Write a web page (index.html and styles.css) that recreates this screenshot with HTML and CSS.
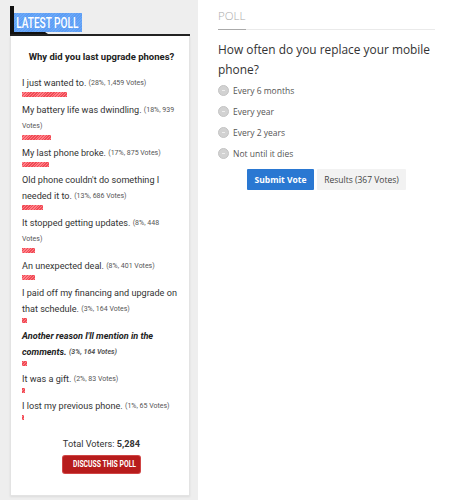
FILE: index.html
```html
<!DOCTYPE html>
<html lang="en">
<head>
  <meta charset="UTF-8" />
  <meta name="viewport" content="width=device-width, initial-scale=1.0" />
  <title>Polls</title>
  <link rel="stylesheet" href="styles.css">
</head>
<body>
  <aside class="sidebar">
    <div class="poll-head">
      <span class="badge"><span class="badge-text">LATEST POLL</span></span>
    </div>
    <div class="card">
      <h3 class="question">Why did you last upgrade phones?</h3>
      <ul class="results">
        <li>I just wanted to. <span class="votes">(28%, 1,459 Votes)</span><div class="bar" style="width: 28%"></div></li>
        <li>My battery life was dwindling. <span class="votes">(18%, 939 Votes)</span><div class="bar" style="width: 18%"></div></li>
        <li>My last phone broke. <span class="votes">(17%, 875 Votes)</span><div class="bar" style="width: 17%"></div></li>
        <li>Old phone couldn't do something I needed it to. <span class="votes">(13%, 686 Votes)</span><div class="bar" style="width: 13%"></div></li>
        <li>It stopped getting updates. <span class="votes">(8%, 448 Votes)</span><div class="bar" style="width: 8%"></div></li>
        <li>An unexpected deal. <span class="votes">(8%, 401 Votes)</span><div class="bar" style="width: 8%"></div></li>
        <li>I paid off my financing and upgrade on that schedule. <span class="votes">(3%, 164 Votes)</span><div class="bar" style="width: 3%"></div></li>
        <li class="mine">Another reason I'll mention in the comments. <span class="votes">(3%, 164 Votes)</span><div class="bar" style="width: 3%"></div></li>
        <li>It was a gift. <span class="votes">(2%, 83 Votes)</span><div class="bar" style="width: 2%"></div></li>
        <li>I lost my previous phone. <span class="votes">(1%, 65 Votes)</span><div class="bar" style="width: 1%"></div></li>
      </ul>
      <p class="total">Total Voters: <b>5,284</b></p>
      <div class="discuss-wrap">
        <a href="#" class="discuss"><span class="discuss-text">DISCUSS THIS POLL</span></a>
      </div>
    </div>
  </aside>

  <main class="main">
    <h4 class="section-title"><span>POLL</span></h4>
    <p class="main-question">How often do you replace your mobile phone?</p>
    <ul class="answers">
      <li><span class="radio"></span>Every 6 months</li>
      <li><span class="radio"></span>Every year</li>
      <li><span class="radio"></span>Every 2 years</li>
      <li><span class="radio"></span>Not until it dies</li>
    </ul>
    <div class="actions">
      <button type="button" class="submit">Submit Vote</button>
      <button type="button" class="show-results">Results (367 Votes)</button>
    </div>
  </main>
</body>
</html>
```

FILE: styles.css
```css
body {
  margin: 0;
  display: flex;
  min-height: 500px;
  font-family: 'Roboto', 'Liberation Sans', sans-serif;
  background: #fff;
}

.sidebar {
  width: 180px;
  padding: 0 8px 6px 10px;
  background-color: #eeeeee;
}

.poll-head {
  position: relative;
  height: 21px;
  padding-top: 13px;
  border-bottom: 2px solid #222;
}

.poll-head::before {
  content: "";
  position: absolute;
  left: 0;
  top: 6px;
  width: 4px;
  height: 28px;
  background: #111;
}

.poll-head::after {
  content: "";
  position: absolute;
  left: 0;
  top: 32px;
  width: 38px;
  height: 2px;
  background: #111;
  clip-path: polygon(0 0, 35px 0, 100% 100%, 0 100%);
}

.badge {
  display: block;
  margin-left: 4px;
  width: 68px;
  height: 19px;
  overflow: hidden;
  background: repeating-linear-gradient(-45deg, #5d9df4 0 1px, #6aa8f8 1px 2px);
}

.badge-text {
  display: inline-block;
  padding-left: 3px;
  font-size: 14px;
  font-weight: 500;
  line-height: 20px;
  color: #fff;
  white-space: nowrap;
  transform: scaleX(0.72);
  transform-origin: left center;
}

.card {
  background: #fff;
  border: 1px solid #e3e3e3;
  border-top: none;
  box-shadow: 0 1px 2px rgba(0, 0, 0, 0.08);
  padding: 13px 8px 22px 11px;
}

.question {
  margin: 0 0 10px;
  font-size: 9.5px;
  line-height: 16px;
  text-align: center;
  color: #222;
}

.results {
  list-style: none;
  margin: 0;
  padding: 0;
}

.results li {
  font-size: 9.1px;
  line-height: 16px;
  color: #333;
  margin-bottom: 5px;
}

.results .votes {
  font-size: 7px;
  vertical-align: top;
  color: #555;
}

.results .mine {
  font-weight: bold;
  font-style: italic;
  color: #222;
}

.bar {
  height: 5px;
  margin-top: 1px;
  min-width: 1px;
  background: repeating-linear-gradient(-45deg, #ef4b55 0 1px, #ff8088 1px 2px);
}

.total {
  margin: 16px 0 4px;
  font-size: 9.2px;
  line-height: 16px;
  text-align: center;
  color: #333;
}

.discuss-wrap {
  text-align: center;
  line-height: 0;
}

.discuss {
  display: inline-block;
  width: 77px;
  height: 17px;
  overflow: hidden;
  background: #b71c1c;
  border-radius: 2px;
  box-shadow: 0 0 0 1px #d04545;
  text-decoration: none;
}

.discuss-text {
  display: inline-block;
  font-size: 9px;
  font-weight: bold;
  line-height: 17px;
  color: #fff;
  white-space: nowrap;
  transform: scaleX(0.76);
}

.main {
  flex: 1;
  padding: 0 17px 0 20px;
  font-family: 'Open Sans', 'Liberation Sans', sans-serif;
}

.section-title {
  margin: 9px 0 0;
  padding-bottom: 6px;
  border-bottom: 1px solid #eaeaea;
  font-size: 11.5px;
  font-weight: 300;
  line-height: 14px;
  color: #aaa;
  position: relative;
}

.section-title span {
  display: inline-block;
  position: relative;
}

.section-title span::after {
  content: "";
  position: absolute;
  left: 0;
  right: -1px;
  bottom: -7px;
  height: 1px;
  background: #aaa;
}

.main-question {
  margin: 9px 0 1px;
  font-size: 11.9px;
  line-height: 20px;
  color: #333;
}

.answers {
  list-style: none;
  margin: 0;
  padding: 0;
}

.answers li {
  display: flex;
  align-items: center;
  gap: 4px;
  height: 21px;
  font-size: 8.5px;
  color: #555;
}

.radio {
  position: relative;
  width: 9px;
  height: 9px;
  border-radius: 50%;
  background: #d2d2d2;
  border: 1px solid #c4c4c4;
}

.radio::after {
  content: "";
  position: absolute;
  left: 3px;
  top: 4px;
  width: 3px;
  height: 1px;
  background: #eee;
}

.actions {
  display: flex;
  justify-content: center;
  gap: 3px;
  margin-top: 5px;
}

.actions button {
  height: 21px;
  border: none;
  border-radius: 1px;
  font-family: 'Open Sans', 'Liberation Sans', sans-serif;
  font-size: 8.5px;
  padding: 0 7px;
  cursor: pointer;
}

.submit {
  width: 67px;
  background: #2a78d2;
  color: #fff;
  font-weight: bold;
}

.show-results {
  width: 89px;
  background: #f2f2f2;
  color: #444;
}
```
